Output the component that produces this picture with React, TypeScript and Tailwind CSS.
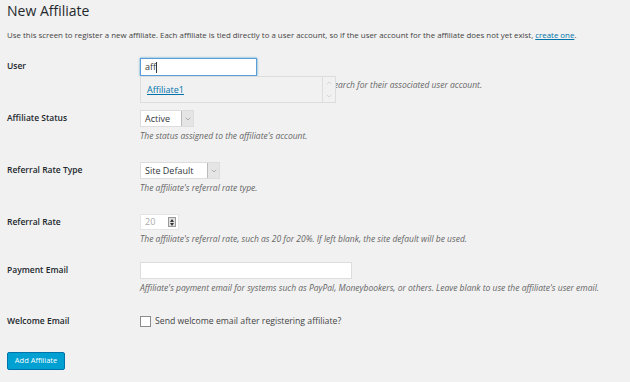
import { ChevronDown, ChevronUp } from 'lucide-react';

const font = { fontFamily: '"Open Sans", "Noto Sans", sans-serif' };

function Label({ text }: { text: string }) {
  return (
    <div className="w-[133px] shrink-0 h-[17px] flex items-center text-[8.5px] font-semibold text-[#23282d]">
      {text}
    </div>
  );
}

function Desc({ children }: { children: React.ReactNode }) {
  return <p className="mt-[3px] text-[8.5px] leading-[11px] italic text-[#666]">{children}</p>;
}

function FakeSelect({ value, width }: { value: string; width: string }) {
  return (
    <div className={`${width} h-[17px] flex bg-white border border-[#ddd]`}>
      <div className="flex-1 flex items-center pl-[4px] text-[9px] text-[#32373c]">{value}</div>
      <div className="w-[12px] flex items-center justify-center bg-[#e5e5e5] border-l border-[#bbb]">
        <ChevronDown className="w-[8px] h-[8px] text-[#777]" strokeWidth={1.5} />
      </div>
    </div>
  );
}

export default function App() {
  return (
    <div className="w-[630px] h-[382px] bg-[#f1f1f1] overflow-hidden px-[7px]" style={font}>
      <h1 className="pt-[1px] text-[14px] leading-[20px] text-[#23282d]">New Affiliate</h1>
      <p className="mt-[9px] text-[7.9px] leading-[11px] text-[#444]">
        Use this screen to register a new affiliate. Each affiliate is tied directly to a user account, so if the user
        account for the affiliate does not yet exist, <span className="text-[#0073aa] underline">create one</span>.
      </p>

      {/* User */}
      <div className="mt-[17px] flex">
        <Label text="User" />
        <div className="relative">
          <div className="w-[117px] h-[18px] bg-white border border-[#5b9dd9] shadow-[0_0_2px_rgba(30,140,190,0.8)] flex items-center pl-[4px] text-[9px] text-[#32373c]">
            aff<span className="w-px h-[11px] bg-[#32373c]" />
          </div>
          <Desc>Begin typing the name of the affiliate to perform a search for their associated user account.</Desc>
          <div className="absolute left-0 top-[18px] w-[196px] h-[27px] bg-[#f1f1f1] border border-[#ddd] flex">
            <div className="flex-1 pl-[6px] pt-[6px] text-[9px] text-[#0073aa] underline">Affiliate1</div>
            <div className="w-[13px] border-l border-[#ddd] flex flex-col items-center justify-between py-[2px]">
              <ChevronUp className="w-[8px] h-[8px] text-[#bbb]" strokeWidth={1.5} />
              <ChevronDown className="w-[8px] h-[8px] text-[#bbb]" strokeWidth={1.5} />
            </div>
          </div>
        </div>
      </div>

      {/* Affiliate Status */}
      <div className="mt-[20px] flex">
        <Label text="Affiliate Status" />
        <div>
          <FakeSelect value="Active" width="w-[54px]" />
          <Desc>The status assigned to the affiliate's account.</Desc>
        </div>
      </div>

      {/* Referral Rate Type */}
      <div className="mt-[21px] flex">
        <Label text="Referral Rate Type" />
        <div>
          <FakeSelect value="Site Default" width="w-[80px]" />
          <Desc>The affiliate's referral rate type.</Desc>
        </div>
      </div>

      {/* Referral Rate */}
      <div className="mt-[21px] flex">
        <Label text="Referral Rate" />
        <div>
          <div className="w-[39px] h-[16px] bg-white border border-[#e5e5e5] flex">
            <div className="flex-1 flex items-center pl-[4px] text-[9px] text-[#aaa]">20</div>
            <div className="w-[8px] my-[2px] mr-[2px] bg-[#e0e0e0] border border-[#999] flex flex-col items-center justify-center gap-[1px]">
              <span className="w-0 h-0 border-x-[2px] border-x-transparent border-b-[3px] border-b-[#333]" />
              <span className="w-0 h-0 border-x-[2px] border-x-transparent border-t-[3px] border-t-[#333]" />
            </div>
          </div>
          <Desc>The affiliate's referral rate, such as 20 for 20%. If left blank, the site default will be used.</Desc>
        </div>
      </div>

      {/* Payment Email */}
      <div className="mt-[18px] flex">
        <Label text="Payment Email" />
        <div>
          <div className="w-[212px] h-[17px] bg-white border border-[#ddd]" />
          <Desc>
            Affiliate's payment email for systems such as PayPal, Moneybookers, or others. Leave blank to use the
            affiliate's user email.
          </Desc>
        </div>
      </div>

      {/* Welcome Email */}
      <div className="mt-[20px] flex">
        <Label text="Welcome Email" />
        <div className="h-[17px] flex items-center gap-[4px]">
          <span className="w-[11px] h-[11px] bg-white border border-[#8c8c8c]" />
          <span className="text-[8.7px] text-[#444]">Send welcome email after registering affiliate?</span>
        </div>
      </div>

      <button className="mt-[22px] h-[18px] w-[58px] rounded-[2px] bg-[#00a0d2] border border-[#0073aa] text-white text-[7.5px] flex items-center justify-center">
        Add Affiliate
      </button>
    </div>
  );
}
